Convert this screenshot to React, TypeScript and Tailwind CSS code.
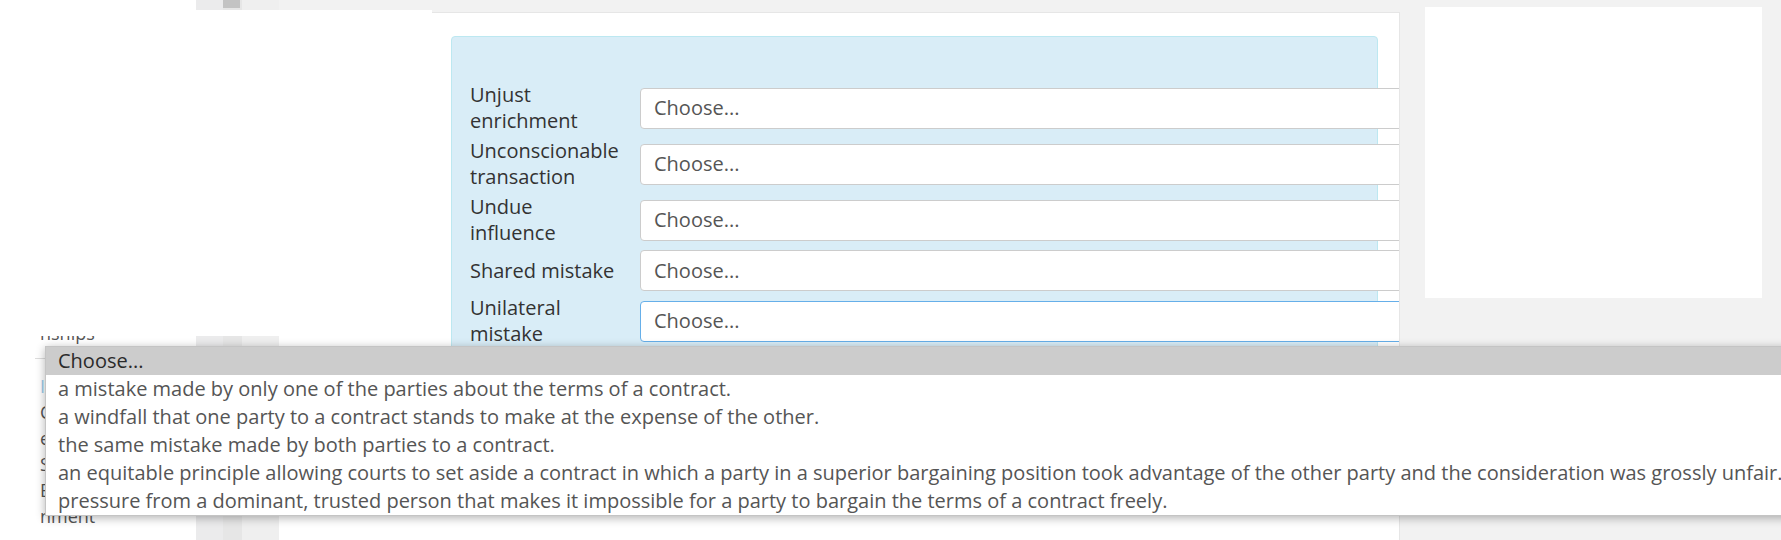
import React from "react";

const rows: { label: string; focused?: boolean }[] = [
  { label: "Unjust enrichment" },
  { label: "Unconscionable transaction" },
  { label: "Undue influence" },
  { label: "Shared mistake" },
  { label: "Unilateral mistake", focused: true },
];

const options = [
  "Choose...",
  "a mistake made by only one of the parties about the terms of a contract.",
  "a windfall that one party to a contract stands to make at the expense of the other.",
  "the same mistake made by both parties to a contract.",
  "an equitable principle allowing courts to set aside a contract in which a party in a superior bargaining position took advantage of the other party and the consideration was grossly unfair.",
  "pressure from a dominant, trusted person that makes it impossible for a party to bargain the terms of a contract freely.",
];

export default function App() {
  return (
    <div className="relative h-[540px] w-full overflow-hidden bg-[#f2f2f2] font-['Open_Sans',sans-serif] text-[20px] leading-[26px] text-[#333]">
      <div className="flex h-full items-start">
        {/* sidebar */}
        <div className="h-full w-[196px] shrink-0 overflow-hidden bg-white pl-[40px] pt-[320px] text-[18px] leading-[26px] text-[#555]">
          <div className="whitespace-nowrap">nships</div>
          <div className="mb-[14px] ml-[-5px] mt-[12px] h-px w-[150px] bg-[#dddddd]" />
          <div className="whitespace-nowrap text-[#9ccbea]">Introduction</div>
          <div className="whitespace-nowrap">Consideration</div>
          <div className="whitespace-nowrap">equitable remedies</div>
          <div className="whitespace-nowrap">Shared mistake</div>
          <div className="whitespace-nowrap">Estoppel</div>
          <div className="whitespace-nowrap">nment</div>
        </div>

        {/* scroll column */}
        <div className="flex h-full w-[83px] shrink-0">
          <div className="h-full w-[27px] bg-[#ebebec]" />
          <div className="flex h-full w-[19px] flex-col bg-[#e6e6e6]">
            <div className="h-[8px] w-[17px] bg-[#c3c3c3]" />
          </div>
          <div className="h-full flex-1 bg-[#efefef]" />
        </div>

        {/* white spacer column */}
        <div className="mt-[10px] h-full w-[153px] shrink-0 bg-white" />

        {/* card */}
        <div className="mt-[12px] h-[540px] w-[968px] shrink-0 overflow-hidden border border-l-0 border-[#e6e6e6] bg-white">
          <div className="ml-[19px] mt-[23px] w-[927px] rounded-[4px] border border-[#bce8f1] bg-[#d9edf7] pb-[20px] pl-[18px] pt-[45px]">
            <div className="flex flex-col gap-[4px]">
              {rows.map((r) => (
                <div key={r.label} className="flex items-center">
                  <div className="mr-[17px] w-[153px] shrink-0 leading-[26px] text-[#333]">{r.label}</div>
                  <div
                    className={
                      r.focused
                        ? "flex h-[41px] w-[800px] shrink-0 items-center rounded-[4px] border border-[#66afe9] bg-white pl-[13px] text-[#555]"
                        : "flex h-[41px] w-[800px] shrink-0 items-center rounded-[4px] border border-[#cccccc] bg-white pl-[13px] text-[#555]"
                    }
                  >
                    Choose...
                  </div>
                </div>
              ))}
            </div>
          </div>
        </div>

        {/* right box */}
        <div className="ml-[25px] mt-[7px] h-[291px] w-[337px] shrink-0 bg-white" />
      </div>

      {/* white overlay top-left */}
      <div className="absolute left-0 top-[10px] h-[326px] w-[432px] bg-white" />

      {/* open dropdown list */}
      <div className="absolute left-[45px] top-[346px] w-[1800px] border border-[#c4c4c4] bg-white shadow-[0_2px_9px_rgba(0,0,0,0.3)]">
        {options.map((o, i) => (
          <div
            key={i}
            className={
              i === 0
                ? "h-[28px] whitespace-nowrap bg-[#cccccc] pl-[12px] leading-[28px] text-[#2a2a2a]"
                : "h-[28px] whitespace-nowrap pl-[12px] leading-[28px] text-[#555]"
            }
          >
            {o}
          </div>
        ))}
      </div>
    </div>
  );
}
